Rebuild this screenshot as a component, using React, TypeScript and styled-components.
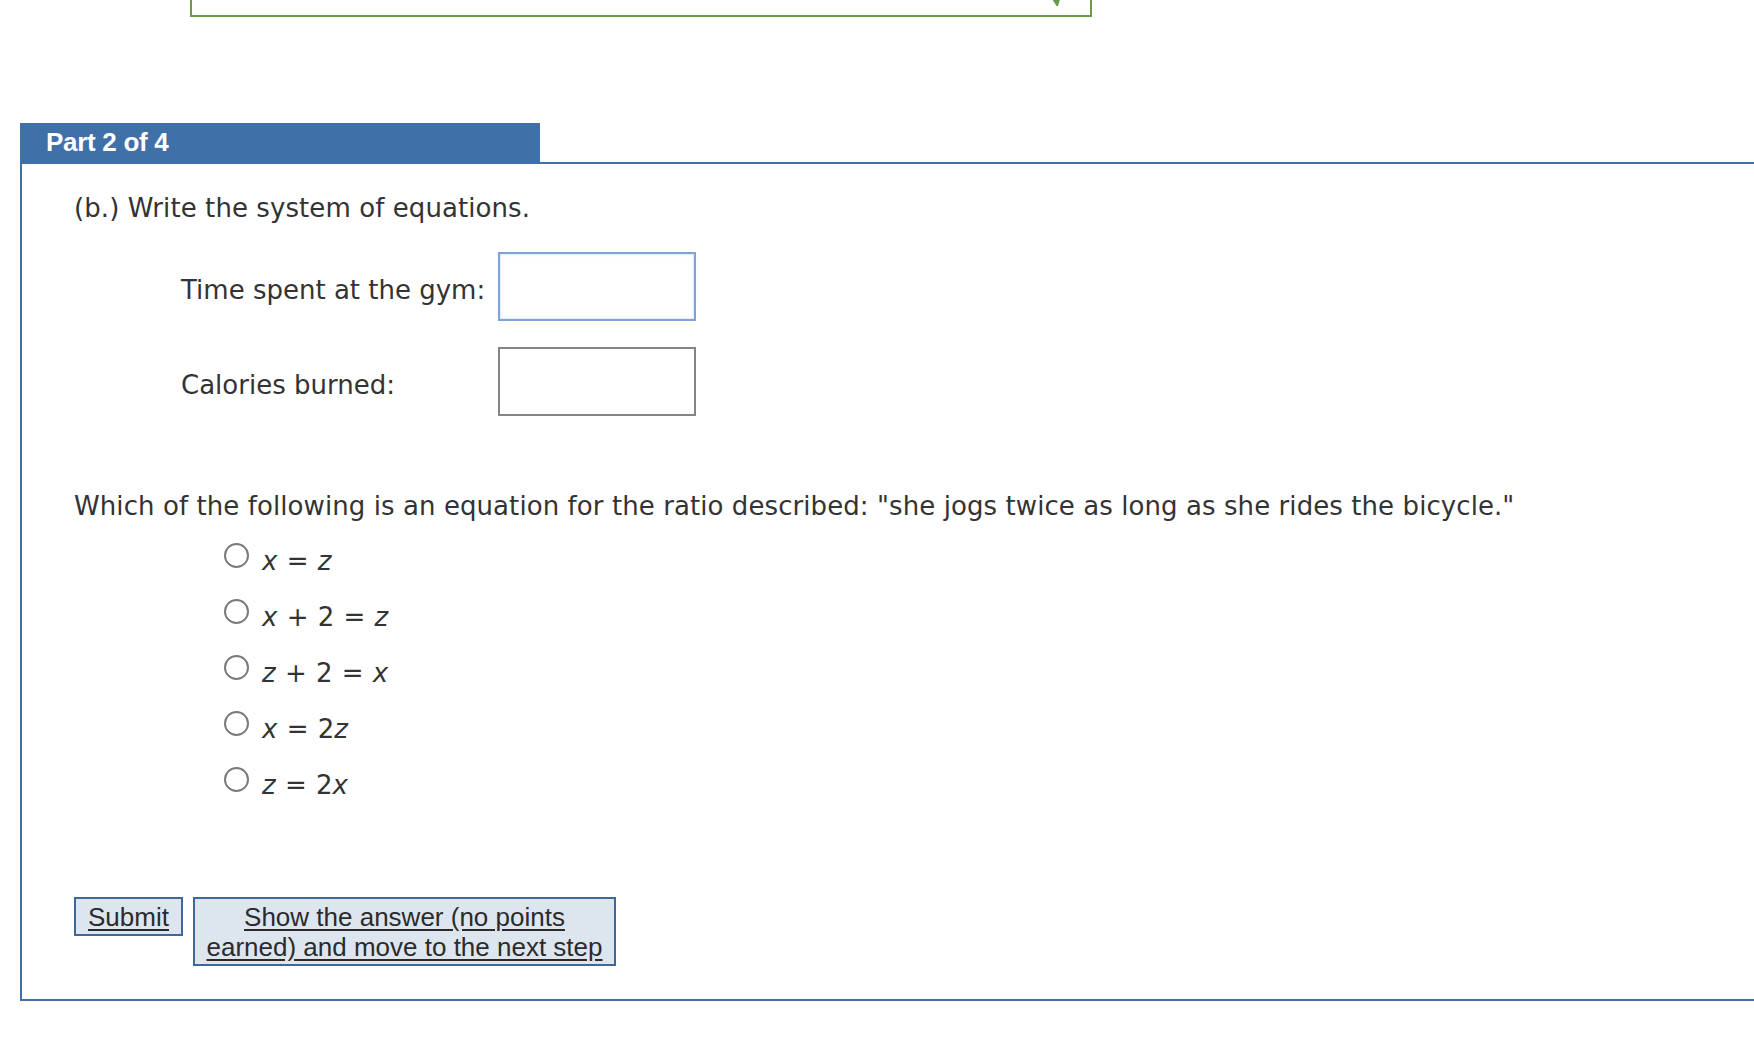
import React from 'react';
import styled, { createGlobalStyle } from 'styled-components';

const GlobalStyle = createGlobalStyle`
  html, body {
    margin: 0;
    padding: 0;
    background: #ffffff;
  }
  body {
    font-family: "DejaVu Sans", Verdana, sans-serif;
    color: #333333;
  }
`;

const Page = styled.div`
  width: 1754px;
  height: 1062px;
  overflow: hidden;
  display: flex;
  flex-direction: column;
`;

const PrevBox = styled.div`
  position: relative;
  margin-left: 190px;
  width: 898px;
  height: 15px;
  border: 2px solid #6b9b47;
  border-top: none;
`;

const CheckTip = styled.svg`
  position: absolute;
  top: -6px;
  right: 26px;
`;

const PartWrap = styled.div`
  margin-top: 106px;
  margin-left: 20px;
  display: flex;
  flex-direction: column;
`;

const Tab = styled.div`
  width: 494px;
  height: 39px;
  background: #4070a8;
  color: #ffffff;
  font-family: "Liberation Sans", Arial, sans-serif;
  font-weight: 700;
  font-size: 26px;
  letter-spacing: -0.3px;
  display: flex;
  align-items: center;
  padding-left: 26px;
  box-sizing: content-box;
`;

const Body = styled.div`
  border-top: 2px solid #4070a8;
  border-left: 2px solid #4070a8;
  border-bottom: 2px solid #4070a8;
  padding: 28px 0 33px 52px;
  display: flex;
  flex-direction: column;
`;

const Prompt = styled.div<{ $top?: number }>`
  font-size: 26px;
  line-height: 32px;
  letter-spacing: 0.08px;
  margin-top: ${(p) => p.$top ?? 0}px;
`;

const Form = styled.div`
  margin-top: 28px;
  margin-left: 107px;
  display: flex;
  flex-direction: column;
  gap: 26px;
`;

const FieldRow = styled.div`
  display: flex;
  align-items: center;
`;

const FieldLabel = styled.label`
  width: 317px;
  font-size: 26px;
  padding-top: 6px;
`;

const Field = styled.input<{ $focused?: boolean }>`
  width: 198px;
  height: 69px;
  box-sizing: border-box;
  margin: 0;
  background: #ffffff;
  outline: none;
  border: 2px solid ${(p) => (p.$focused ? '#7fa3d4' : '#858585')};
  box-shadow: ${(p) => (p.$focused ? 'inset 0 0 3px rgba(80, 130, 200, 0.35)' : 'none')};
`;

const Options = styled.div`
  margin-top: 10px;
  margin-left: 150px;
  display: flex;
  flex-direction: column;
`;

const Option = styled.label`
  height: 56px;
  display: flex;
  align-items: center;
  gap: 13px;
  font-size: 26px;
  cursor: pointer;
`;

const Radio = styled.input`
  appearance: none;
  margin: 0 0 10px 0;
  width: 25px;
  height: 25px;
  border: 2px solid #7a7a7a;
  border-radius: 50%;
  background: #ffffff;
  box-sizing: border-box;
`;

const Math = styled.span`
  word-spacing: 1px;
  padding-top: 2px;
  i {
    font-style: oblique;
  }
`;

const Actions = styled.div`
  margin-top: 85px;
  display: flex;
  align-items: flex-start;
  gap: 10px;
`;

const ActionButton = styled.button<{ $width: number }>`
  margin: 0;
  width: ${(p) => p.$width}px;
  font-family: "Liberation Sans", Arial, sans-serif;
  font-size: 26px;
  line-height: 30px;
  color: #2b2b2b;
  text-decoration: underline;
  text-underline-offset: 3px;
  background: #dde6ef;
  border: 2px solid #40679a;
  padding: 3px 6px 2px;
  text-align: center;
  cursor: pointer;
  box-sizing: border-box;
`;

const options: { key: string; eq: React.ReactNode }[] = [
  { key: 'a', eq: <><i>x</i> = <i>z</i></> },
  { key: 'b', eq: <><i>x</i> + 2 = <i>z</i></> },
  { key: 'c', eq: <><i>z</i> + 2 = <i>x</i></> },
  { key: 'd', eq: <><i>x</i> = 2<i>z</i></> },
  { key: 'e', eq: <><i>z</i> = 2<i>x</i></> },
];

export default function App() {
  return (
    <Page>
      <GlobalStyle />
      <PrevBox>
        <CheckTip width="14" height="12" viewBox="0 0 14 12">
          <path d="M2 2 L7 10 L12 -6" stroke="#6b9b47" strokeWidth="3" fill="none" />
        </CheckTip>
      </PrevBox>

      <PartWrap>
        <Tab>Part 2 of 4</Tab>
        <Body>
          <Prompt>(b.) Write the system of equations.</Prompt>

          <Form>
            <FieldRow>
              <FieldLabel>Time spent at the gym:</FieldLabel>
              <Field $focused type="text" />
            </FieldRow>
            <FieldRow>
              <FieldLabel>Calories burned:</FieldLabel>
              <Field type="text" />
            </FieldRow>
          </Form>

          <Prompt $top={74}>
            Which of the following is an equation for the ratio described: "she jogs twice as long as she rides the bicycle."
          </Prompt>

          <Options>
            {options.map((o) => (
              <Option key={o.key}>
                <Radio type="radio" name="ratio" />
                <Math>{o.eq}</Math>
              </Option>
            ))}
          </Options>

          <Actions>
            <ActionButton $width={109}>Submit</ActionButton>
            <ActionButton $width={423}>Show the answer (no points earned) and move to the next step</ActionButton>
          </Actions>
        </Body>
      </PartWrap>
    </Page>
  );
}
